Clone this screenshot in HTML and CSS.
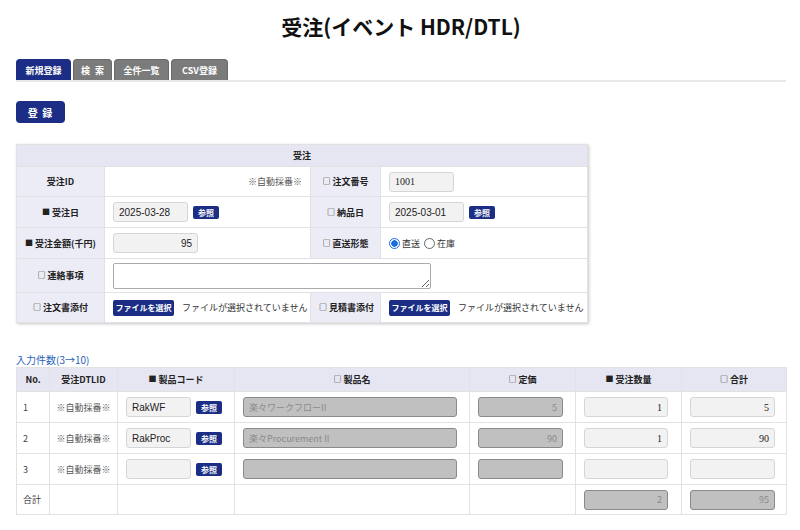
FILE: index.html
```html
<!DOCTYPE html>
<html lang="ja">
<head>
<meta charset="utf-8">
<title>受注(イベント HDR/DTL)</title>
<link rel="stylesheet" href="styles.css">
</head>
<body>
<h1 class="title">受注(イベント HDR/DTL)</h1>
<nav class="tabs">
  <span class="tab tab-active tw55">新規登録</span>
  <span class="tab tw39">検 索</span>
  <span class="tab tw55">全件一覧</span>
  <span class="tab tw57">CSV登録</span>
</nav>
<div class="actions"><button class="btn-reg">登 録</button></div>

<table class="form">
  <colgroup><col class="fc1"><col class="fc2"><col class="fc3"><col class="fc4"></colgroup>
  <tr class="fr-head"><th colspan="4">受注</th></tr>
  <tr class="fr-1">
    <th>受注ID</th>
    <td class="auto">※自動採番※</td>
    <th><span class="mk">□</span> 注文番号</th>
    <td><input class="inp serif w64" value="1001"></td>
  </tr>
  <tr class="fr-2">
    <th><span class="mk">■</span> 受注日</th>
    <td><input class="inp w75" value="2025-03-28"><button class="ref">参照</button></td>
    <th><span class="mk">□</span> 納品日</th>
    <td><input class="inp w75" value="2025-03-01"><button class="ref">参照</button></td>
  </tr>
  <tr class="fr-3">
    <th><span class="mk">■</span> 受注金額(千円)</th>
    <td><input class="inp w85 num" value="95"></td>
    <th><span class="mk">□</span> 直送形態</th>
    <td><span class="radio radio-on"></span><span class="rlabel">直送</span><span class="radio"></span><span class="rlabel">在庫</span></td>
  </tr>
  <tr class="fr-4">
    <th><span class="mk">□</span> 連絡事項</th>
    <td colspan="3"><textarea class="memo"></textarea></td>
  </tr>
  <tr class="fr-5">
    <th><span class="mk">□</span> 注文書添付</th>
    <td><button class="file-btn">ファイルを選択</button><span class="file-txt">ファイルが選択されていません</span></td>
    <th><span class="mk">□</span> 見積書添付</th>
    <td><button class="file-btn">ファイルを選択</button><span class="file-txt">ファイルが選択されていません</span></td>
  </tr>
</table>

<div class="count">入力件数(3→10)</div>

<table class="detail">
  <colgroup><col class="d1"><col class="d2"><col class="d3"><col class="d4"><col class="d5"><col class="d6"><col class="d7"></colgroup>
  <tr class="dr-head">
    <th>No.</th>
    <th>受注DTLID</th>
    <th><span class="mk">■</span> 製品コード</th>
    <th><span class="mk">□</span> 製品名</th>
    <th><span class="mk">□</span> 定価</th>
    <th><span class="mk">■</span> 受注数量</th>
    <th><span class="mk">□</span> 合計</th>
  </tr>
  <tr class="dr">
    <td class="no">1</td>
    <td class="auto-c">※自動採番※</td>
    <td><input class="inp w65" value="RakWF"><button class="ref">参照</button></td>
    <td><input class="inp dis w214" value="楽々ワークフローII"></td>
    <td><input class="inp dis w85 num" value="5"></td>
    <td><input class="inp w84 num serif" value="1"></td>
    <td><input class="inp w85 num serif" value="5"></td>
  </tr>
  <tr class="dr">
    <td class="no">2</td>
    <td class="auto-c">※自動採番※</td>
    <td><input class="inp w65" value="RakProc"><button class="ref">参照</button></td>
    <td><input class="inp dis w214" value="楽々Procurement II"></td>
    <td><input class="inp dis w85 num" value="90"></td>
    <td><input class="inp w84 num serif" value="1"></td>
    <td><input class="inp w85 num serif" value="90"></td>
  </tr>
  <tr class="dr">
    <td class="no">3</td>
    <td class="auto-c">※自動採番※</td>
    <td><input class="inp w65" value=""><button class="ref">参照</button></td>
    <td><input class="inp dis w214" value=""></td>
    <td><input class="inp dis w85 num" value=""></td>
    <td><input class="inp w84 num" value=""></td>
    <td><input class="inp w85 num" value=""></td>
  </tr>
  <tr class="dr-total">
    <td class="no">合計</td>
    <td></td>
    <td></td>
    <td></td>
    <td></td>
    <td><input class="inp dis w84 num" value="2"></td>
    <td><input class="inp dis w85 num" value="95"></td>
  </tr>
</table>
</body>
</html>
```
FILE: styles.css
```css
* { box-sizing: border-box; }

body {
  margin: 0;
  padding: 0 14px 0 16px;
  font-family: "Noto Sans CJK JP", "Liberation Sans", sans-serif;
  font-size: 9px;
  color: #333;
  background: #fff;
}

.title {
  margin: 0;
  padding-top: 12px;
  height: 40px;
  line-height: 28px;
  text-align: center;
  font-size: 21px;
  font-weight: bold;
  color: #111;
}

.tabs {
  display: flex;
  gap: 2px;
  margin-top: 19px;
  border-bottom: 2px solid #e8e8e8;
}

.tab {
  display: flex;
  align-items: center;
  justify-content: center;
  height: 21px;
  padding: 0;
  background: #7b7b7b;
  border: 1px solid #6a6a6a;
  border-bottom: none;
  border-radius: 4px 4px 0 0;
  color: #fff;
  font-weight: bold;
  font-size: 9px;
  white-space: pre;
}

.tw55 { width: 55px; }
.tw39 { width: 39px; word-spacing: 3px; }
.tw57 { width: 57px; }

.tab-active {
  background: #1b2d84;
  border-color: #1b2d84;
}

.actions { margin-top: 19px; height: 22px; }

.btn-reg {
  width: 49px;
  height: 22px;
  padding: 0;
  border: none;
  border-radius: 4px;
  background: #1b2d84;
  color: #fff;
  font-family: inherit;
  font-weight: bold;
  font-size: 10px;
  letter-spacing: 1px;
  display: block;
}

/* form table */
.form {
  margin-top: 21px;
  width: 571px;
  border-collapse: collapse;
  table-layout: fixed;
  box-shadow: 1px 1px 3px rgba(0, 0, 0, 0.22);
}

.fc1 { width: 88px; }
.fc2 { width: 206px; }
.fc3 { width: 70px; }
.fc4 { width: 207px; }

.form th,
.form td {
  border: 1px solid #e2e2e2;
  padding: 0 8px;
  white-space: nowrap;
}

.form th {
  background: #ececf6;
  font-weight: bold;
  color: #222;
  text-align: center;
}

.form .fr-head th { background: #e6e6f3; height: 22px; }
.fr-1 { height: 30px; }
.fr-2 { height: 31px; }
.fr-3 { height: 31px; }
.fr-4 { height: 34px; }
.fr-5 { height: 30px; }

.form td { background: #fff; }
.form td.auto { text-align: right; color: #555; }

.mk { font-size: 8px; position: relative; top: -1px; }

.inp {
  height: 20px;
  border: 1px solid #d6d6d6;
  border-radius: 3px;
  background: #f2f2f2;
  font-family: "Liberation Sans", sans-serif;
  font-size: 10px;
  color: #222;
  padding: 0 5px;
  vertical-align: middle;
  outline: none;
}

.inp.serif { font-family: "Liberation Serif", serif; }
.inp.num { text-align: right; }
.inp.dis {
  background: #c0c0c0;
  border-color: #8a8a8a;
  color: #8a8a8a;
  font-family: "Noto Sans CJK JP", "Liberation Sans", sans-serif;
  font-size: 9px;
}

.w64 { width: 65px; }
.w65 { width: 65px; }
.w75 { width: 75px; }
.w84 { width: 84px; }
.w85 { width: 85px; }
.w214 { width: 214px; }

.ref {
  margin-left: 5px;
  width: 26px;
  height: 13px;
  padding: 0;
  border: none;
  border-radius: 2px;
  background: #1b2d84;
  color: #fff;
  font-family: inherit;
  font-size: 8px;
  font-weight: bold;
  line-height: 13px;
  vertical-align: middle;
}

.radio {
  display: inline-block;
  width: 11px;
  height: 11px;
  border: 1px solid #666;
  border-radius: 50%;
  vertical-align: middle;
  background: #fff;
}

.radio-on {
  border: 1px solid #1a6fe0;
  background: radial-gradient(circle, #1a6fe0 0 3px, #fff 3.5px);
}

.rlabel { margin: 0 4px 0 2px; vertical-align: middle; }

.memo {
  display: block;
  width: 318px;
  height: 26px;
  border: 1px solid #aaa;
  border-radius: 2px;
  resize: both;
  background: #fff;
}

.file-btn {
  height: 16px;
  width: 61px;
  padding: 0;
  border: none;
  border-radius: 2px;
  background: #1b2d84;
  color: #fff;
  font-family: inherit;
  font-size: 8px;
  font-weight: bold;
  vertical-align: middle;
}

.file-txt { margin-left: 8px; vertical-align: middle; color: #333; }

.count {
  margin-top: 30px;
  height: 14px;
  line-height: 14px;
  color: #2a62b8;
  font-size: 10px;
}

/* detail table */
.detail {
  margin-top: 0;
  width: 770px;
  border-collapse: collapse;
  table-layout: fixed;
}

.d1 { width: 33px; }
.d2 { width: 68px; }
.d3 { width: 117px; }
.d4 { width: 235px; }
.d5 { width: 106px; }
.d6 { width: 106px; }
.d7 { width: 105px; }

.detail th,
.detail td {
  border: 1px solid #e2e2e2;
  padding: 0 8px;
  white-space: nowrap;
}

.detail th {
  background: #e6e6f3;
  font-weight: bold;
  color: #222;
  text-align: center;
  height: 24px;
}

.dr { height: 31px; }
.dr-total { height: 30px; }
.detail td.no { color: #444; }
.detail td.auto-c { text-align: center; color: #555; }
.detail td.no, .detail td.auto-c { padding: 0 6px; }
```
